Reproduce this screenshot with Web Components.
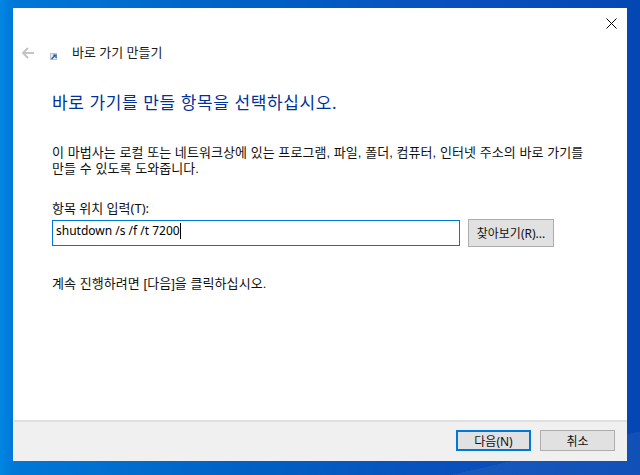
<!DOCTYPE html>
<html lang="ko">
<head>
<meta charset="utf-8">
<title>바로 가기 만들기</title>
<style>
html, body { margin: 0; height: 100%; }
body { font-family: "Noto Sans", "Noto Sans CJK KR", sans-serif; overflow: hidden; }
</style>
</head>
<body>
<win-desktop>
  <wizard-window>
    <wizard-header slot="header" title-text="바로 가기 만들기"></wizard-header>
    <h-text>바로 가기를 만들 항목을 선택하십시오.</h-text>
    <p-text top="31">이 마법사는 로컬 또는 네트워크상에 있는 프로그램, 파일, 폴더, 컴퓨터, 인터넷 주소의 바로 가기를<br>만들 수 있도록 도와줍니다.</p-text>
    <path-row label="항목 위치 입력(T):" value="shutdown /s /f /t 7200"></path-row>
    <p-text top="29">계속 진행하려면 [다음]을 클릭하십시오.</p-text>
    <win-button slot="footer" variant="default">다음(N)</win-button>
    <win-button slot="footer">취소</win-button>
  </wizard-window>
</win-desktop>

<script>
const FONT = '"Noto Sans", "Noto Sans CJK KR", sans-serif';

class WinDesktop extends HTMLElement {
    constructor() {
        super();
        this.attachShadow({ mode: 'open' }).innerHTML = `
            <style>
                :host {
                    display: block;
                    width: 640px;
                    height: 475px;
                    box-sizing: border-box;
                    padding: 8px 13px 14px 13px;
                    overflow: hidden;
                    background:
                        linear-gradient(167deg, transparent 0 93%, rgba(255,255,255,.05) 93% 100%),
                        linear-gradient(90deg, #0086e2 0, #0078d8 2%, #0060c4 40%, #0a50bc 70%, #0547b2 100%);
                }
            </style>
            <slot></slot>
        `;
    }
}

class WizardWindow extends HTMLElement {
    constructor() {
        super();
        this.attachShadow({ mode: 'open' }).innerHTML = `
            <style>
                :host {
                    display: flex;
                    flex-direction: column;
                    height: 453px;
                    background: #fff;
                    font-family: ${FONT};
                    font-size: 13px;
                    color: #000;
                }
                .body { flex: 1; padding: 0 39px; display: flex; flex-direction: column; }
                .footer {
                    box-sizing: border-box;
                    height: 41px;
                    border-top: 2px solid #dfdfdf;
                    background: #f0f0f0;
                    display: flex;
                    justify-content: flex-end;
                    align-items: flex-start;
                    gap: 9px;
                    padding: 8px 12px 0 0;
                    margin-left: 1px;
                }
            </style>
            <slot name="header"></slot>
            <div class="body"><slot></slot></div>
            <div class="footer"><slot name="footer"></slot></div>
        `;
    }
}

class WizardHeader extends HTMLElement {
    constructor() {
        super();
        this.attachShadow({ mode: 'open' }).innerHTML = `
            <style>
                :host { display: block; height: 84px; position: relative; }
                .row { display: flex; align-items: center; height: 20px; padding: 35px 0 0 8px; }
                .back { width: 14px; height: 14px; }
                .icon { width: 7px; height: 7px; margin: 7px 0 0 15px; }
                .title { margin: -2px 0 0 15px; line-height: 20px; color: #1a1a1a; }
                .close { position: absolute; right: 10px; top: 10px; width: 11px; height: 11px; }
            </style>
            <svg class="close" viewBox="0 0 11 11"><path d="M.5.5l10 10M10.5.5l-10 10" stroke="#000" fill="none"/></svg>
            <div class="row">
                <svg class="back" viewBox="0 0 14 14"><path d="M13 7H2M7 2L2 7l5 5" stroke="#c4c4c4" stroke-width="2" fill="none"/></svg>
                <svg class="icon" viewBox="0 0 7 7">
                    <rect width="7" height="7" fill="#b9c3d3"/>
                    <rect x="1" y="1" width="5" height="5" fill="#e4e8ef"/>
                    <path d="M1.5 6L5 2.5M3 2h3v3" stroke="#1f55a8" stroke-width="1.2" fill="none"/>
                </svg>
                <span class="title"></span>
            </div>
        `;
        this.shadowRoot.querySelector('.title').textContent = this.getAttribute('title-text');
    }
}

class HText extends HTMLElement {
    constructor() {
        super();
        this.attachShadow({ mode: 'open' }).innerHTML = `
            <style>
                :host { display: block; font-size: 17px; line-height: 22px; color: #003399; height: 22px; letter-spacing: .6px; }
            </style>
            <slot></slot>
        `;
    }
}

class PText extends HTMLElement {
    constructor() {
        super();
        this.attachShadow({ mode: 'open' }).innerHTML = `
            <style>
                :host {
                    display: block;
                    font-family: "Liberation Sans", "Noto Sans CJK KR", sans-serif;
                    line-height: 16px;
                    letter-spacing: .06px;
                    margin-top: ${this.getAttribute('top') || 0}px;
                    color: #111;
                    white-space: nowrap;
                }
            </style>
            <slot></slot>
        `;
    }
}

class PathRow extends HTMLElement {
    constructor() {
        super();
        this.attachShadow({ mode: 'open' }).innerHTML = `
            <style>
                :host { display: block; margin-top: 23px; }
                label { display: block; line-height: 16px; color: #111; }
                .row { display: flex; gap: 8px; margin-top: 3px; align-items: center; height: 28px; }
                .field {
                    width: 408px;
                    height: 26px;
                    box-sizing: border-box;
                    border: 1px solid #0078d7;
                    padding: 0 3px 5px;
                    display: flex;
                    align-items: center;
                    font-size: 12px;
                    color: #000;
                    white-space: pre;
                }
                .caret { width: 1px; height: 16px; background: #000; }
            </style>
            <label></label>
            <div class="row">
                <div class="field"><span class="val"></span><span class="caret"></span></div>
                <win-button size="browse">찾아보기(R)...</win-button>
            </div>
        `;
        this.shadowRoot.querySelector('label').textContent = this.getAttribute('label');
        this.shadowRoot.querySelector('.val').textContent = this.getAttribute('value');
    }
}

class WinButton extends HTMLElement {
    constructor() {
        super();
        const isDefault = this.getAttribute('variant') === 'default';
        const isBrowse = this.getAttribute('size') === 'browse';
        this.attachShadow({ mode: 'open' }).innerHTML = `
            <style>
                :host {
                    display: inline-flex;
                    align-items: center;
                    justify-content: center;
                    box-sizing: border-box;
                    width: ${isBrowse ? 86 : 75}px;
                    height: ${isBrowse ? 28 : 21}px;
                    background: #e1e1e1;
                    border: ${isDefault ? '2px solid #0078d7' : '1px solid #adadad'};
                    font-size: 12px;
                    color: #111;
                }
            </style>
            <slot></slot>
        `;
    }
}

// children first, so path-row can use win-button in its shadow root
customElements.define('win-button', WinButton);
customElements.define('win-desktop', WinDesktop);
customElements.define('wizard-window', WizardWindow);
customElements.define('wizard-header', WizardHeader);
customElements.define('h-text', HText);
customElements.define('p-text', PText);
customElements.define('path-row', PathRow);
</script>
</body>
</html>
